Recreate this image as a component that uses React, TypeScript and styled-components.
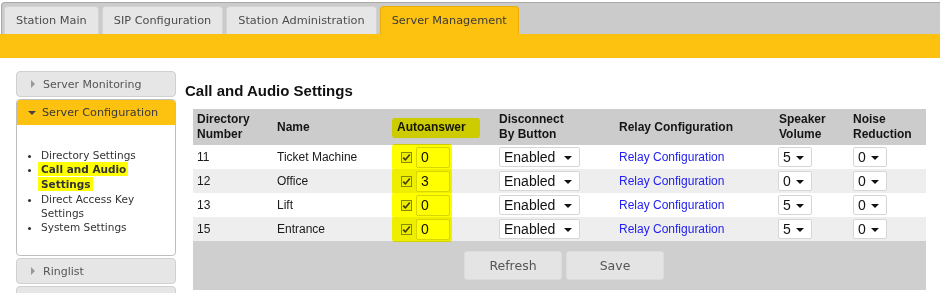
import React from 'react';
import styled, { createGlobalStyle } from 'styled-components';

const GlobalStyle = createGlobalStyle`
  html, body {
    margin: 0;
    padding: 0;
    background: #ffffff;
  }
  body {
    font-family: "DejaVu Sans", Verdana, sans-serif;
    color: #333;
  }
`;

const Page = styled.div`
  width: 940px;
  height: 293px;
  overflow: hidden;
`;

const TabBar = styled.div`
  margin: 2px 0 0 1px;
  height: 32px;
  box-sizing: border-box;
  padding: 4px 0 0 2px;
  display: flex;
  align-items: flex-end;
  gap: 3px;
  background: #cbcbcb;
  border-top: 1px solid #a9a9a9;
  border-left: 1px solid #a9a9a9;
  border-top-left-radius: 4px;
`;

const Tab = styled.div<{ $active?: boolean }>`
  height: 28px;
  box-sizing: border-box;
  padding: 0 11px;
  display: flex;
  align-items: center;
  font-size: 11.3px;
  color: ${p => (p.$active ? '#3a3a3a' : '#4c4c4c')};
  background: ${p => (p.$active ? '#fdc110' : '#e6e6e6')};
  border: 1px solid ${p => (p.$active ? '#e9ae08' : '#d3d3d3')};
  border-bottom: none;
  border-radius: 4px 4px 0 0;
`;

const Band = styled.div`
  height: 24px;
  background: #fdc110;
`;

const Body = styled.div`
  display: flex;
  align-items: flex-start;
  gap: 9px;
  padding: 13px 0 0 16px;
`;

const Sidebar = styled.div`
  width: 160px;
  display: flex;
  flex-direction: column;
  gap: 2px;
`;

const NavItem = styled.div`
  height: 26px;
  box-sizing: border-box;
  display: flex;
  align-items: center;
  gap: 6px;
  padding-left: 12px;
  background: #e6e6e6;
  border: 1px solid #d0d0d0;
  border-radius: 4px;
  font-size: 11px;
  color: #555;
`;

const Panel = styled.div`
  border: 1px solid #bdbdbd;
  border-radius: 4px;
  overflow: hidden;
`;

const PanelHead = styled.div`
  height: 25px;
  display: flex;
  align-items: center;
  gap: 6px;
  padding-left: 11px;
  background: #fdc110;
  font-size: 11.2px;
  color: #3a3a3a;
`;

const Arrow = styled.span<{ $down?: boolean }>`
  width: 0;
  height: 0;
  ${p =>
    p.$down
      ? `border-left: 4px solid transparent;
         border-right: 4px solid transparent;
         border-top: 4px solid #444;`
      : `border-top: 4px solid transparent;
         border-bottom: 4px solid transparent;
         border-left: 4px solid #999;
         margin-left: 2px;
         margin-right: 2px;`}
`;

const SubList = styled.ul`
  margin: 0;
  padding: 23px 8px 21px 24px;
  list-style: disc;
  font-size: 10.5px;
  line-height: 14px;
  color: #333;
`;

const SubItem = styled.li<{ $current?: boolean }>`
  font-weight: ${p => (p.$current ? 'bold' : 'normal')};
  ${p => (p.$current ? 'line-height: 15px;' : '')}
`;

const Marker = styled.span`
  background: #ffff00;
  padding: 1px 2px 1px 3px;
  margin-left: -3px;
  -webkit-box-decoration-break: clone;
  box-decoration-break: clone;
`;

const Main = styled.div`
  display: flex;
  flex-direction: column;
  padding-top: 11px;
`;

const Title = styled.h2`
  margin: 0 0 9px 0;
  font-family: "Liberation Sans", Arial, sans-serif;
  font-size: 15px;
  line-height: 18px;
  font-weight: bold;
  color: #111;
`;

const Table = styled.table`
  margin-left: 8px;
  width: 733px;
  border-collapse: collapse;
  table-layout: fixed;
  font-family: "Liberation Sans", Arial, sans-serif;
  font-size: 12px;
  color: #1a1a1a;
`;

const Th = styled.th`
  background: #cccccc;
  height: 36px;
  padding: 0 0 0 4px;
  text-align: left;
  vertical-align: middle;
  font-weight: bold;
  line-height: 15px;
  color: #151515;
`;

const Row = styled.tr<{ $alt?: boolean }>`
  background: ${p => (p.$alt ? '#eeeeee' : '#ffffff')};
`;

const Td = styled.td`
  height: 24px;
  padding: 0 0 0 4px;
  vertical-align: middle;
  white-space: nowrap;
`;

const Highlight = styled.span<{ $head?: boolean }>`
  position: relative;
  display: inline-flex;
  align-items: center;
  gap: 4px;
  ${p => (p.$head ? 'padding: 0 2px;' : 'margin-left: 6px;')}
  &::after {
    content: '';
    position: absolute;
    inset: ${p => (p.$head ? '-2px -12px -3px -3px' : '-3px -2px -2px -9px')};
    background: #ffff00;
    mix-blend-mode: multiply;
    border-radius: 3px;
    pointer-events: none;
  }
`;

const Check = styled.span`
  width: 11px;
  height: 11px;
  box-sizing: border-box;
  display: inline-flex;
  align-items: center;
  justify-content: center;
  border: 1px solid #8a8a8a;
  background: #ececec;
`;

const NumInput = styled.input`
  width: 34px;
  height: 21px;
  box-sizing: border-box;
  padding: 0 0 0 4px;
  border: 1px solid #d6d6d6;
  border-radius: 2px;
  background: #fff;
  font-family: "Liberation Sans", Arial, sans-serif;
  font-size: 14px;
  color: #111;
`;

const SelectBox = styled.span<{ $w: number }>`
  position: relative;
  display: inline-block;
  vertical-align: middle;
  &::after {
    content: '';
    position: absolute;
    right: 8px;
    top: 9px;
    border-left: 4px solid transparent;
    border-right: 4px solid transparent;
    border-top: 4px solid #111;
    pointer-events: none;
  }
  select {
    appearance: none;
    -webkit-appearance: none;
    width: ${p => p.$w}px;
    height: 20px;
    box-sizing: border-box;
    margin: 0;
    padding: 0 0 0 4px;
    border: 1px solid #d6d6d6;
    border-radius: 2px;
    background: #fff;
    font-family: "Liberation Sans", Arial, sans-serif;
    font-size: 14px;
    color: #111;
  }
`;

const RelayLink = styled.a`
  color: #2222ee;
  text-decoration: none;
`;

const Footer = styled.td`
  background: #d0cfcf;
  height: 49px;
  padding: 0;
  vertical-align: top;
`;

const ButtonRow = styled.div`
  display: flex;
  justify-content: center;
  gap: 4px;
  padding: 10px 0 0 9px;
`;

const Button = styled.button`
  width: 98px;
  height: 29px;
  border: 1px solid #dcdcdc;
  border-radius: 3px;
  background: #e4e4e4;
  font-family: "DejaVu Sans", Verdana, sans-serif;
  font-size: 12.5px;
  color: #555;
`;

const entries = [
  { num: '11', name: 'Ticket Machine', delay: '0', volume: '5', noise: '0' },
  { num: '12', name: 'Office', delay: '3', volume: '0', noise: '0' },
  { num: '13', name: 'Lift', delay: '0', volume: '5', noise: '0' },
  { num: '15', name: 'Entrance', delay: '0', volume: '5', noise: '0' },
];

const CheckMark = () => (
  <svg width="9" height="9" viewBox="0 0 9 9">
    <path d="M1.2 4.6 L3.4 6.9 L7.8 1.6" fill="none" stroke="#3c3c3c" strokeWidth="1.6" />
  </svg>
);

export default function App() {
  return (
    <Page>
      <GlobalStyle />
      <TabBar>
        <Tab>Station Main</Tab>
        <Tab>SIP Configuration</Tab>
        <Tab>Station Administration</Tab>
        <Tab $active>Server Management</Tab>
      </TabBar>
      <Band />

      <Body>
        <Sidebar>
          <NavItem>
            <Arrow />
            Server Monitoring
          </NavItem>
          <Panel>
            <PanelHead>
              <Arrow $down />
              Server Configuration
            </PanelHead>
            <SubList>
              <SubItem>Directory Settings</SubItem>
              <SubItem $current>
                <Marker>Call and Audio Settings</Marker>
              </SubItem>
              <SubItem>Direct Access Key Settings</SubItem>
              <SubItem>System Settings</SubItem>
            </SubList>
          </Panel>
          <NavItem>
            <Arrow />
            Ringlist
          </NavItem>
          <NavItem />
        </Sidebar>

        <Main>
          <Title>Call and Audio Settings</Title>
          <Table>
            <colgroup>
              <col style={{ width: 80 }} />
              <col style={{ width: 118 }} />
              <col style={{ width: 104 }} />
              <col style={{ width: 120 }} />
              <col style={{ width: 160 }} />
              <col style={{ width: 74 }} />
              <col style={{ width: 77 }} />
            </colgroup>
            <thead>
              <tr>
                <Th>Directory<br />Number</Th>
                <Th>Name</Th>
                <Th>
                  <Highlight $head>Autoanswer</Highlight>
                </Th>
                <Th>Disconnect<br />By Button</Th>
                <Th>Relay Configuration</Th>
                <Th>Speaker<br />Volume</Th>
                <Th>Noise<br />Reduction</Th>
              </tr>
            </thead>
            <tbody>
              {entries.map((e, i) => (
                <Row key={e.num} $alt={i % 2 === 1}>
                  <Td>{e.num}</Td>
                  <Td>{e.name}</Td>
                  <Td>
                    <Highlight>
                      <Check><CheckMark /></Check>
                      <NumInput defaultValue={e.delay} />
                    </Highlight>
                  </Td>
                  <Td>
                    <SelectBox $w={81}>
                      <select defaultValue="Enabled">
                        <option>Enabled</option>
                        <option>Disabled</option>
                      </select>
                    </SelectBox>
                  </Td>
                  <Td>
                    <RelayLink href="#">Relay Configuration</RelayLink>
                  </Td>
                  <Td>
                    <SelectBox $w={34} style={{ marginLeft: -1 }}>
                      <select defaultValue={e.volume}>
                        {['0', '1', '2', '3', '4', '5'].map(v => (
                          <option key={v}>{v}</option>
                        ))}
                      </select>
                    </SelectBox>
                  </Td>
                  <Td>
                    <SelectBox $w={34}>
                      <select defaultValue={e.noise}>
                        {['0', '1', '2'].map(v => (
                          <option key={v}>{v}</option>
                        ))}
                      </select>
                    </SelectBox>
                  </Td>
                </Row>
              ))}
              <tr>
                <Footer colSpan={7}>
                  <ButtonRow>
                    <Button>Refresh</Button>
                    <Button>Save</Button>
                  </ButtonRow>
                </Footer>
              </tr>
            </tbody>
          </Table>
        </Main>
      </Body>
    </Page>
  );
}
